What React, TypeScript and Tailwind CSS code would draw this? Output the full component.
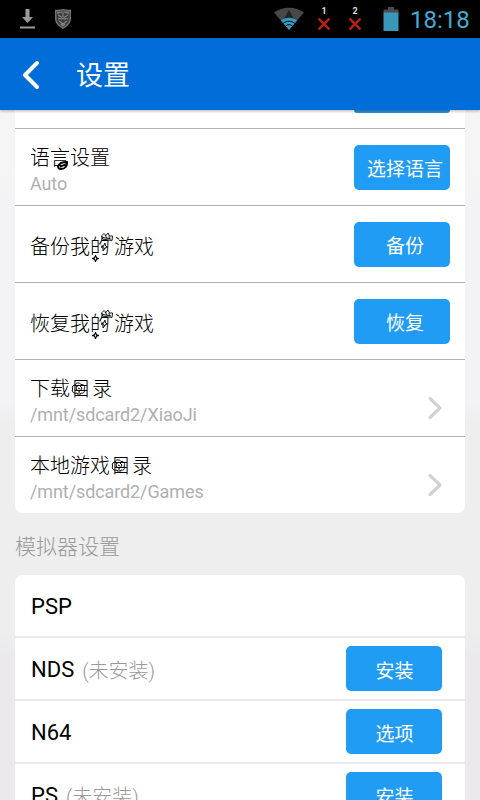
import React from 'react'
import clsx from 'clsx'

interface ActionButtonProps {
  label: string
  className?: string
}

const ActionButton: React.FC<ActionButtonProps> = ({ label, className }) => (
  <button
    type="button"
    className={clsx(
      'flex h-[45px] w-24 shrink-0 items-center justify-center whitespace-nowrap rounded-[5px] bg-[#219cf5] pt-[7px] text-[19px] font-normal text-white',
      className
    )}
  >
    {label}
  </button>
)

// Small ornaments drawn over single characters of the handwriting theme
const Leaf = () => (
  <svg
    className="absolute right-0.5 bottom-0.5 h-[9px] w-[11px]"
    viewBox="0 0 11 9"
    fill="none"
    stroke="currentColor"
    strokeWidth="1.9"
  >
    <path d="M1 5.5C2 2 6 1 10 1C10.5 5 8 8 4 8C2 8 1 7 1 5.5ZM3 6L8 3.5" />
  </svg>
)

const Crown = () => (
  <svg
    className="absolute -top-[1px] left-[10px] h-[27px] w-[14px]"
    viewBox="0 0 14 27"
    fill="none"
    stroke="currentColor"
    strokeWidth="0.9"
  >
    <path d="M1.5 4L4 1.5L6 3.5L8 1L9.5 4L12.5 4L12 8.5L2.5 7ZM3 5.5L11 7M5 3L7 6M9 4L9.5 7" />
    <path d="M5 11L5.5 14L7.5 15L5 16L3 19L3 16L1 15L3.5 14Z" />
  </svg>
)

const Diamond = () => (
  <svg
    className="absolute -bottom-[1px] left-[2px] h-[7px] w-[7px]"
    viewBox="0 0 6 6"
    fill="white"
    stroke="currentColor"
    strokeWidth="1"
  >
    <path d="M3 0.5L4 2.5L5.5 3L4 3.5L3 5.5L2 3.5L0.5 3L2 2.5Z" />
  </svg>
)

const Rose = () => (
  <svg
    className="absolute top-[7px] left-[1px] h-[15px] w-[15px]"
    viewBox="0 0 15 15"
    fill="none"
    stroke="currentColor"
    strokeWidth="1"
  >
    <path d="M1.5 7C.5 4 3 3 4 3C5 0 9 .5 10 2.5C13 2 14.5 5 13 7C14.5 10 12 12 10 11L8 14L6 11C3 12 .5 10 1.5 7Z" />
    <path d="M5 5L8 3L11 6L9 9L5.5 8ZM7 6L9 7M8 9V12" />
  </svg>
)

const Ornate: React.FC<{
  char: string
  className?: string
  children: React.ReactNode
}> = ({ char, className, children }) => (
  <span className={clsx('relative inline-block', className)}>
    {char}
    {children}
  </span>
)

const De = () => (
  <Ornate char="的" className="w-6">
    <Crown />
    <Diamond />
  </Ornate>
)

const Mu = () => (
  <Ornate char="目" className="w-[22px] pl-px">
    <Rose />
  </Ornate>
)

const ChevronRight = () => (
  <svg
    className="mt-5 mr-[7px] h-6 w-4 shrink-0"
    viewBox="0 0 16 24"
    fill="none"
    stroke="#d2d2d2"
    strokeWidth="3.2"
    strokeLinecap="round"
    strokeLinejoin="round"
  >
    <path d="M3 2.5L13 12L3 21.5" />
  </svg>
)

interface SettingRowProps {
  title: React.ReactNode
  detail?: string
  last?: boolean
  children: React.ReactNode
}

const SettingRow: React.FC<SettingRowProps> = ({
  title,
  detail,
  last,
  children
}) => (
  <div
    className={clsx(
      'flex h-[77px] shrink-0 items-center justify-between px-[15px]',
      { 'border-b border-[#b1b1b7]': !last, 'pb-px': last }
    )}
  >
    <div className="pt-1.5">
      <div className="h-7 whitespace-nowrap text-[20px] leading-7 text-black">
        {title}
      </div>
      {detail && (
        <div className="h-6 text-[18px] leading-6 font-normal tracking-[-0.1px] text-[#b0b0b0]">
          {detail}
        </div>
      )}
    </div>
    {children}
  </div>
)

const emulators = [
  { name: 'PSP', installed: true },
  { name: 'NDS', installed: false, action: '安装' },
  { name: 'N64', installed: true, action: '选项' },
  { name: 'PS', installed: false, action: '安装' }
]

const StatusBar = () => (
  <div className="flex h-[38px] shrink-0 items-center bg-black">
    <svg className="ml-5 h-5 w-[15px]" viewBox="0 0 15 20" fill="#999">
      <path d="M5.5 0H9.5V8H13L7.5 14L2 8H5.5ZM0 17.5H15V19.5H0Z" />
    </svg>
    <svg className="ml-5 h-5 w-4" viewBox="0 0 16 20" fill="none">
      <path
        d="M8 .7C10 1.3 13 1.4 15.3 1.3V10C15.3 14.5 11 17.5 8 19.3C5 17.5 .7 14.5 .7 10V1.3C3 1.4 6 1.3 8 .7Z"
        fill="#3e3e3e"
        stroke="#777"
        strokeWidth="1.3"
      />
      <path d="M2 2.5H14V5L8 3.5L2 5Z" fill="#777" />
      <path
        d="M3 6L7 8.5M13 6L9 8.5M3 10C5 8 6 12 8 9C10 12 11 8 13 10M4 12L8 15L12 12M8 4V8M6 15L8 17L10 15"
        stroke="#858585"
        strokeWidth="1.1"
      />
    </svg>
    <svg className="ml-auto h-6 w-[30px]" viewBox="0 0 30 24">
      <path d="M0 5.5C8-.8 22-.8 30 5.5L15 23Z" fill="#484848" />
      <path d="M15 3L20 12H10Z" fill="#222" />
      <path d="M7 13.5C11.5 9.7 18.5 9.7 23 13.5L15 23Z" fill="#359dc2" />
      <path
        d="M9 16.5C12.5 13.5 17.5 13.5 21 16.5M11.5 19C13.5 17.2 16.5 17.2 18.5 19"
        fill="none"
        stroke="#000"
        strokeWidth="1"
      />
    </svg>
    {['1', '2'].map((sim, i) => (
      <div
        key={sim}
        className={clsx(
          'flex h-[38px] w-3 flex-col items-center pt-[7px]',
          i === 0 ? 'ml-3.5' : 'ml-[19px]'
        )}
      >
        <span className="text-[9px] leading-[9px] font-bold text-[#ddd]">
          {sim}
        </span>
        <svg
          className="mt-0.5 h-3 w-3 shrink-0"
          viewBox="0 0 12 12"
          stroke="#b51f18"
          strokeWidth="2.6"
        >
          <path d="M.5 .5L11.5 11.5M11.5 .5L.5 11.5" />
        </svg>
      </div>
    ))}
    <svg className="ml-[22px] h-6 w-4" viewBox="0 0 16 24">
      <path d="M5 0H11V2.5H15.5V6H.5V2.5H5Z" fill="#4b4b4b" />
      <path d="M.5 5.5H15.5V24H.5Z" fill="#3898ba" />
    </svg>
    <span className="mr-[9px] ml-[11px] w-[61px] whitespace-nowrap pt-0.5 font-[Roboto,sans-serif] text-[24px] leading-9 font-normal text-[#42acd3]">
      18:18
    </span>
  </div>
)

const App: React.FC = () => (
  <div className="flex h-[800px] w-[480px] flex-col overflow-hidden bg-[linear-gradient(#f5f5f5_0_170px,#f3f2f5_200px_398px,#eeeeee_430px_630px,#ebe9ed_658px)] font-[Roboto,'Noto_Sans_CJK_SC',sans-serif] font-light">
    <StatusBar />

    <header className="relative z-10 flex h-[72px] shrink-0 items-center bg-[#006dd9] shadow-[0_1px_3px_rgba(0,0,0,0.3)]">
      <svg
        className="mt-0.5 ml-[21px] h-[30px] w-5"
        viewBox="0 0 20 30"
        fill="none"
        stroke="#fff"
        strokeWidth="4"
        strokeLinecap="round"
        strokeLinejoin="round"
      >
        <path d="M16 3L4 15L16 27" />
      </svg>
      <h1 className="ml-[35px] pt-1 text-[27px] leading-9 font-normal text-white">
        设置
      </h1>
    </header>

    <section className="mx-[15px] flex h-[403px] shrink-0 flex-col rounded-b-[8px] bg-white">
      <div className="flex h-[19px] shrink-0 justify-end border-b border-[#b1b1b7] pr-[15px]">
        <div className="h-[3px] w-24 rounded-b-[5px] bg-[#2d90dc]" />
      </div>

      <SettingRow
        title={
          <>
            语<Ornate char="言"><Leaf /></Ornate>设置
          </>
        }
        detail="Auto"
      >
        <ActionButton
          className="pl-1.5"
          label={
            '选择语言'
          }
        />
      </SettingRow>
      <SettingRow
        title={
          <>
            备份我<De />游戏
          </>
        }
      >
        <ActionButton label="备份" className="pl-1.5" />
      </SettingRow>
      <SettingRow
        title={
          <>
            恢复我<De />游戏
          </>
        }
      >
        <ActionButton label="恢复" className="pl-1.5" />
      </SettingRow>
      <SettingRow
        title={
          <>
            下载<Mu />录
          </>
        }
        detail="/mnt/sdcard2/XiaoJi"
      >
        <ChevronRight />
      </SettingRow>
      <SettingRow
        title={
          <>
            本地游戏<Mu />录
          </>
        }
        detail="/mnt/sdcard2/Games"
        last
      >
        <ChevronRight />
      </SettingRow>
    </section>

    <h2 className="mx-[15px] flex h-[62px] shrink-0 items-center pt-[7px] text-[21px] text-[#999]">
      模拟器设置
    </h2>

    <section className="mx-[15px] flex h-[260px] shrink-0 flex-col rounded-t-[8px] bg-white">
      {emulators.map(({ name, installed, action }) => (
        <div
          key={name}
          className="flex h-[63px] shrink-0 items-center justify-between border-b-2 border-[#ebebeb] pr-[23px] pl-4"
        >
          <div className="flex items-center gap-2 whitespace-nowrap pt-0.5">
            <span className="text-[22px] font-normal text-black">{name}</span>
            {!installed && (
              <span className="pt-0.5 text-[20px] text-[#999]">(未安装)</span>
            )}
          </div>
          {action && <ActionButton label={action} className="pl-px" />}
        </div>
      ))}
    </section>
  </div>
)

export default App
